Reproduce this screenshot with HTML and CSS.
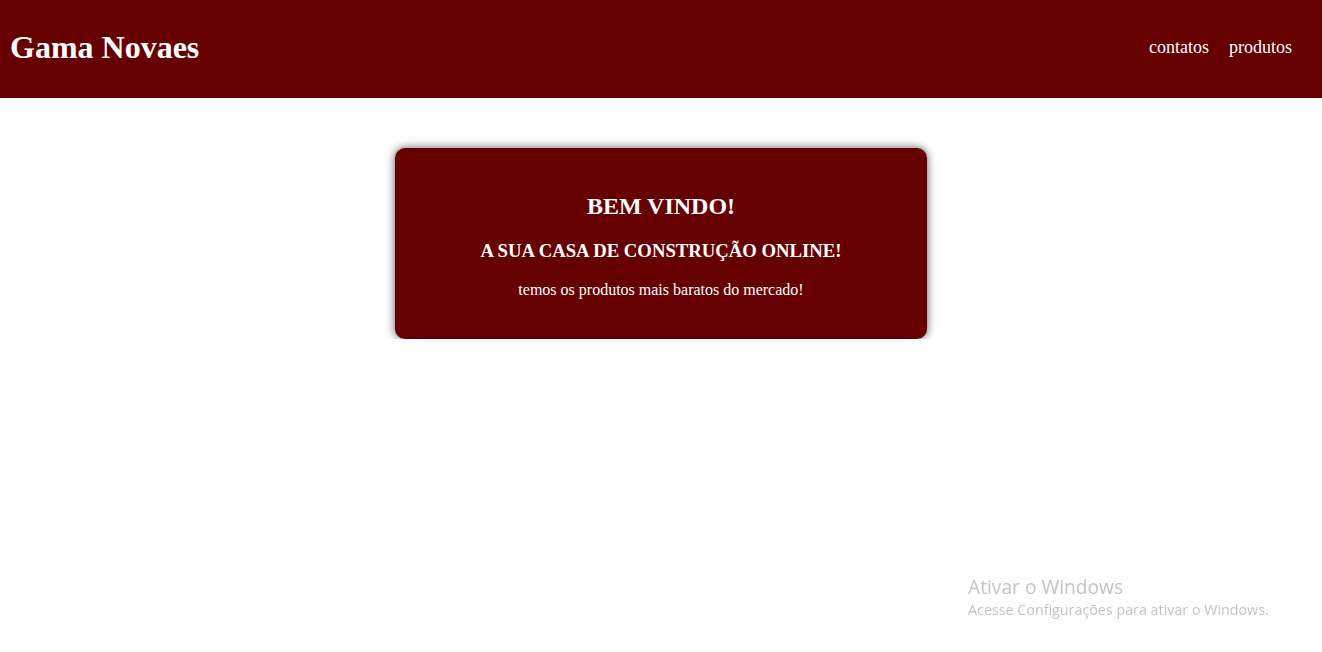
FILE: index.html
```html
<!DOCTYPE html>
<html lang="pt-BR">
<head>
<meta charset="utf-8">
<title>Gama Novaes</title>
<link rel="stylesheet" href="styles.css">
</head>
<body>
<header class="topbar">
  <h1 class="brand">Gama Novaes</h1>
  <nav class="nav">
    <a href="#" class="nav-link">contatos</a>
    <a href="#" class="nav-link">produtos</a>
  </nav>
</header>
<main class="content">
  <section class="welcome">
    <h2 class="welcome-title">BEM VINDO!</h2>
    <h3 class="welcome-sub">A SUA CASA DE CONSTRUÇÃO ONLINE!</h3>
    <p class="welcome-text">temos os produtos mais baratos do mercado!</p>
  </section>
</main>
<div class="watermark">
  <div class="wm-title">Ativar o Windows</div>
  <div class="wm-text">Acesse Configurações para ativar o Windows.</div>
</div>
</body>
</html>
```
FILE: styles.css
```css
html, body {
  margin: 0;
  padding: 0;
  background: #ffffff;
  font-family: "Liberation Serif", "Times New Roman", serif;
}

.topbar {
  height: 98px;
  background: #660000;
  display: flex;
  align-items: center;
  justify-content: space-between;
  padding: 0 30px 0 10px;
  box-sizing: border-box;
  color: #ffffff;
}

.brand {
  margin: 0;
  font-size: 32px;
  font-weight: bold;
  line-height: 1;
  position: relative;
  top: -2px;
}

.nav {
  display: flex;
  gap: 20px;
  position: relative;
  top: -2px;
}

.nav-link {
  color: #ffffff;
  text-decoration: none;
  font-size: 18px;
}

.content {
  display: flex;
  justify-content: center;
  padding-top: 50px;
}

.welcome {
  width: 532px;
  box-sizing: border-box;
  background: #660000;
  color: #ffffff;
  border-radius: 10px;
  box-shadow: 0 0 10px rgba(0, 0, 0, 0.65);
  padding: 24px 20px 24px;
  text-align: center;
}

.welcome-title {
  margin: 20px 0;
  font-size: 24px;
  font-weight: bold;
  line-height: 28px;
}

.welcome-sub {
  margin: 19px 0;
  font-size: 18.72px;
  font-weight: bold;
  line-height: 22px;
}

.welcome-text {
  margin: 18px 0 16px;
  font-size: 16px;
  line-height: 18px;
}

.watermark {
  position: fixed;
  left: 968px;
  top: 574px;
  color: #c4c4c4;
  font-family: "Open Sans", "Noto Sans", sans-serif;
}

.wm-title {
  font-size: 19.2px;
  line-height: 26px;
}

.wm-text {
  font-size: 14.3px;
  line-height: 19px;
}
```
